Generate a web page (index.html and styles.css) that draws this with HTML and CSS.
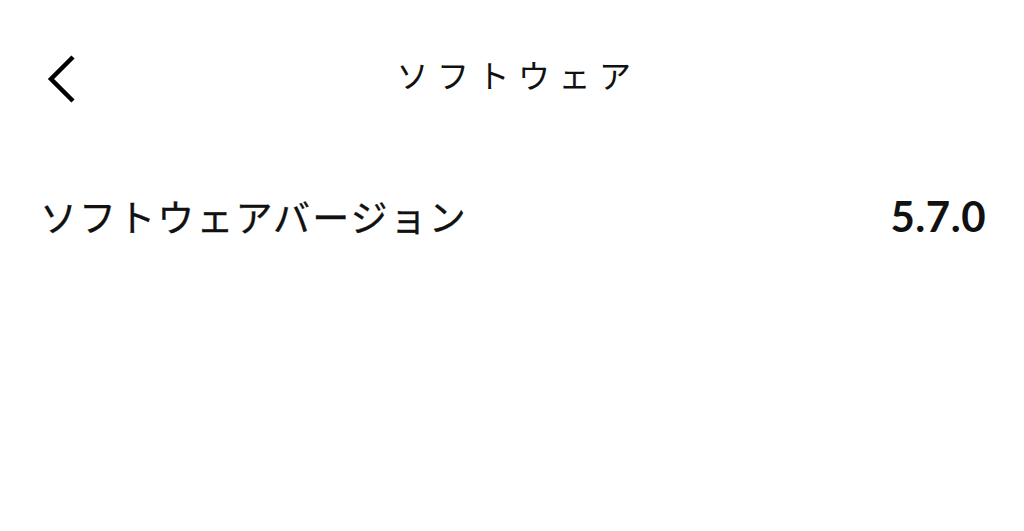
FILE: index.html
```html
<!DOCTYPE html>
<html lang="ja">
<head>
<meta charset="utf-8">
<link rel="stylesheet" href="styles.css">
</head>
<body>
<div class="page">
  <header class="header">
    <span class="back">
      <svg width="30" height="50" viewBox="0 0 30 50"><polyline points="27,3 5,25 27,47" fill="none" stroke="#000" stroke-width="4.5" stroke-linecap="butt" stroke-linejoin="miter"/></svg>
    </span>
    <h1 class="title">ソフトウェア</h1>
    <span class="spacer"></span>
  </header>
  <div class="row">
    <span class="label">ソフトウェアバージョン</span>
    <span class="value">5.7.0</span>
  </div>
</div>
</body>
</html>
```
FILE: styles.css
```css
html, body { margin: 0; padding: 0; background: #fff; }
body { font-family: "Noto Sans CJK JP", "Noto Sans", sans-serif; color: #111; }
.page { width: 1024px; height: 531px; }
.header { display: flex; align-items: center; height: 80px; padding: 34px 40px 0 46px; }
.back { width: 60px; display: flex; margin-top: 9px; }
.back svg { display: block; }
.title { flex: 1; text-align: center; margin: 0; font-size: 32px; font-weight: 400; letter-spacing: 8.5px; padding-left: 6px; }
.spacer { width: 60px; }
.row { display: flex; justify-content: space-between; align-items: center; padding: 75px 38px 0 40px; }
.label { font-size: 37px; letter-spacing: 2.1px; -webkit-text-stroke: 0.3px #111; }
.value { font-family: "Lato", sans-serif; font-weight: 700; font-size: 42px; letter-spacing: 0.5px; }
```
